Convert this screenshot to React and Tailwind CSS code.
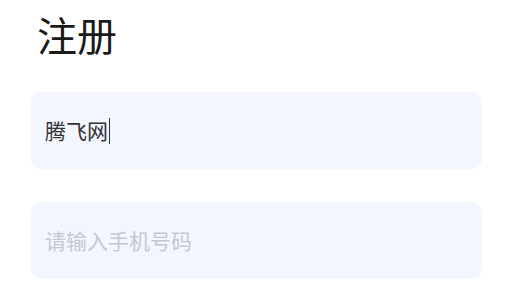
export default function App() {
  const font = { fontFamily: '"Noto Sans CJK SC", "Noto Sans", sans-serif' };
  return (
    <div className="w-[514px] h-[288px] bg-white overflow-hidden" style={font}>
      <h1 className="ml-[37px] pt-[14px] text-[40px] leading-none font-normal text-[#1a1a1a]">注册</h1>
      <div className="ml-[31px] mr-[32px] mt-[38px] flex flex-col gap-[33px]">
        <div className="h-[77px] rounded-[10px] bg-[#f3f6fe] flex items-center pl-[14px]">
          <span className="text-[21px] leading-none text-[#333333]">腾飞网</span>
          <span className="ml-[1px] w-[1px] h-[26px] bg-[#333333]"></span>
        </div>
        <div className="h-[77px] rounded-[10px] bg-[#f3f6fe] flex items-center pl-[14px]">
          <span className="text-[21px] leading-none text-[#c4c7cf]">请输入手机号码</span>
        </div>
      </div>
    </div>
  );
}
